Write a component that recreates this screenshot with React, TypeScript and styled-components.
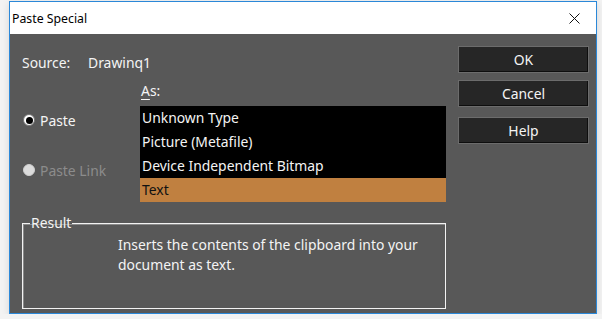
import styled, { createGlobalStyle } from 'styled-components'

const GlobalStyle = createGlobalStyle`
  html, body {
    margin: 0;
    padding: 0;
    background: #f3f3f3;
    font-family: 'Noto Sans', 'Open Sans', sans-serif;
  }
`

const Window = styled.div`
  margin: 1px 0 0 9px;
  width: 588px;
  height: 313px;
  box-sizing: border-box;
  border: 1px solid #2b88d8;
  display: flex;
  flex-direction: column;
  box-shadow: 0 2px 8px rgba(0, 0, 0, 0.12);
  background: #585858;
`

const TitleBar = styled.div`
  height: 32px;
  background: #fff;
  display: flex;
  align-items: center;
  justify-content: space-between;
  padding: 0 14px 0 2px;
  color: #000;
  font-size: 12.3px;
`

const CloseButton = styled.div`
  width: 16px;
  height: 16px;
  display: flex;
  align-items: center;
  justify-content: center;
`

const Body = styled.div`
  flex: 1;
  display: flex;
  padding: 11px 7px 0 12px;
  color: #f4f4f4;
  font-size: 13.9px;
`

const LeftPane = styled.div`
  width: 424px;
  display: flex;
  flex-direction: column;
`

const SourceRow = styled.div`
  display: flex;
  height: 20px;
  line-height: 20px;
  margin-top: 8px;
`

const SourceLabel = styled.span`
  width: 66px;
`

const Middle = styled.div`
  display: flex;
  margin-top: 8px;
`

const RadioColumn = styled.div`
  width: 118px;
  display: flex;
  flex-direction: column;
  padding-top: 29px;
  gap: 30px;
`

const RadioRow = styled.label<{ disabled?: boolean }>`
  display: flex;
  align-items: center;
  gap: 5px;
  height: 20px;
  padding-left: 1px;
  color: ${({ disabled }) => (disabled ? '#8c8c8c' : '#f4f4f4')};
`

const RadioDot = styled.span<{ checked?: boolean; disabled?: boolean }>`
  width: 12px;
  height: 12px;
  border-radius: 50%;
  box-sizing: border-box;
  background: ${({ disabled }) => (disabled ? '#dcdcdc' : '#fff')};
  border: 1px solid ${({ disabled }) => (disabled ? '#cfcfcf' : '#777')};
  display: flex;
  align-items: center;
  justify-content: center;

  &::after {
    content: '';
    width: 7px;
    height: 7px;
    border-radius: 50%;
    background: ${({ checked }) => (checked ? '#000' : 'transparent')};
  }
`

const ListColumn = styled.div`
  flex: 1;
  display: flex;
  flex-direction: column;
`

const AsLabel = styled.div`
  height: 20px;
  line-height: 20px;
  padding-left: 1px;
  margin-bottom: 5px;

  u {
    text-underline-offset: 3px;
  }
`

const List = styled.div`
  background: #000;
  display: flex;
  flex-direction: column;
`

const ListItem = styled.div<{ selected?: boolean }>`
  height: 24px;
  line-height: 24px;
  padding-left: 2px;
  background: ${({ selected }) => (selected ? '#c08040' : 'transparent')};
  color: ${({ selected }) => (selected ? '#111' : '#f4f4f4')};
`

const ResultBox = styled.fieldset`
  margin: 13px 0 0 0;
  height: 94px;
  box-sizing: border-box;
  border: 1px solid #f2f2f2;
  box-shadow: inset 1px 1px 0 #8a8a8a;
  padding: 0 0 0 95px;
`

const Legend = styled.legend`
  padding: 0 1px;
  margin-left: -88px;
  line-height: 16px;
`

const ResultText = styled.p`
  margin: 4px 0 0 0;
  line-height: 20px;
  width: 320px;
`

const ButtonColumn = styled.div`
  display: flex;
  flex-direction: column;
  margin-left: 12px;
  width: 131px;
  padding-top: 1px;
`

const Button = styled.button<{ gapTop?: number }>`
  height: 27px;
  margin-top: ${({ gapTop }) => gapTop ?? 0}px;
  background: #262626;
  border: 1px solid #6c6c6c;
  box-shadow: inset -1px -1px 0 #0e0e0e;
  color: #f4f4f4;
  font-family: inherit;
  font-size: 13.9px;
  padding: 0;
`

export default function App() {
  return (
    <>
      <GlobalStyle />
      <Window>
        <TitleBar>
          <span>Paste Special</span>
          <CloseButton>
            <svg width="11" height="11" viewBox="0 0 11 11">
              <path d="M0.5 0.5 L10.5 10.5 M10.5 0.5 L0.5 10.5" stroke="#111" strokeWidth="1" />
            </svg>
          </CloseButton>
        </TitleBar>
        <Body>
          <LeftPane>
            <SourceRow>
              <SourceLabel>Source:</SourceLabel>
              <span>Drawinq1</span>
            </SourceRow>
            <Middle>
              <RadioColumn>
                <RadioRow>
                  <RadioDot checked />
                  Paste
                </RadioRow>
                <RadioRow disabled>
                  <RadioDot disabled />
                  Paste Link
                </RadioRow>
              </RadioColumn>
              <ListColumn>
                <AsLabel>
                  <u>A</u>s:
                </AsLabel>
                <List>
                  <ListItem>Unknown Type</ListItem>
                  <ListItem>Picture (Metafile)</ListItem>
                  <ListItem>Device Independent Bitmap</ListItem>
                  <ListItem selected>Text</ListItem>
                </List>
              </ListColumn>
            </Middle>
            <ResultBox>
              <Legend>Result</Legend>
              <ResultText>Inserts the contents of the clipboard into your document as text.</ResultText>
            </ResultBox>
          </LeftPane>
          <ButtonColumn>
            <Button>OK</Button>
            <Button gapTop={7}>Cancel</Button>
            <Button gapTop={10}>Help</Button>
          </ButtonColumn>
        </Body>
      </Window>
    </>
  )
}
